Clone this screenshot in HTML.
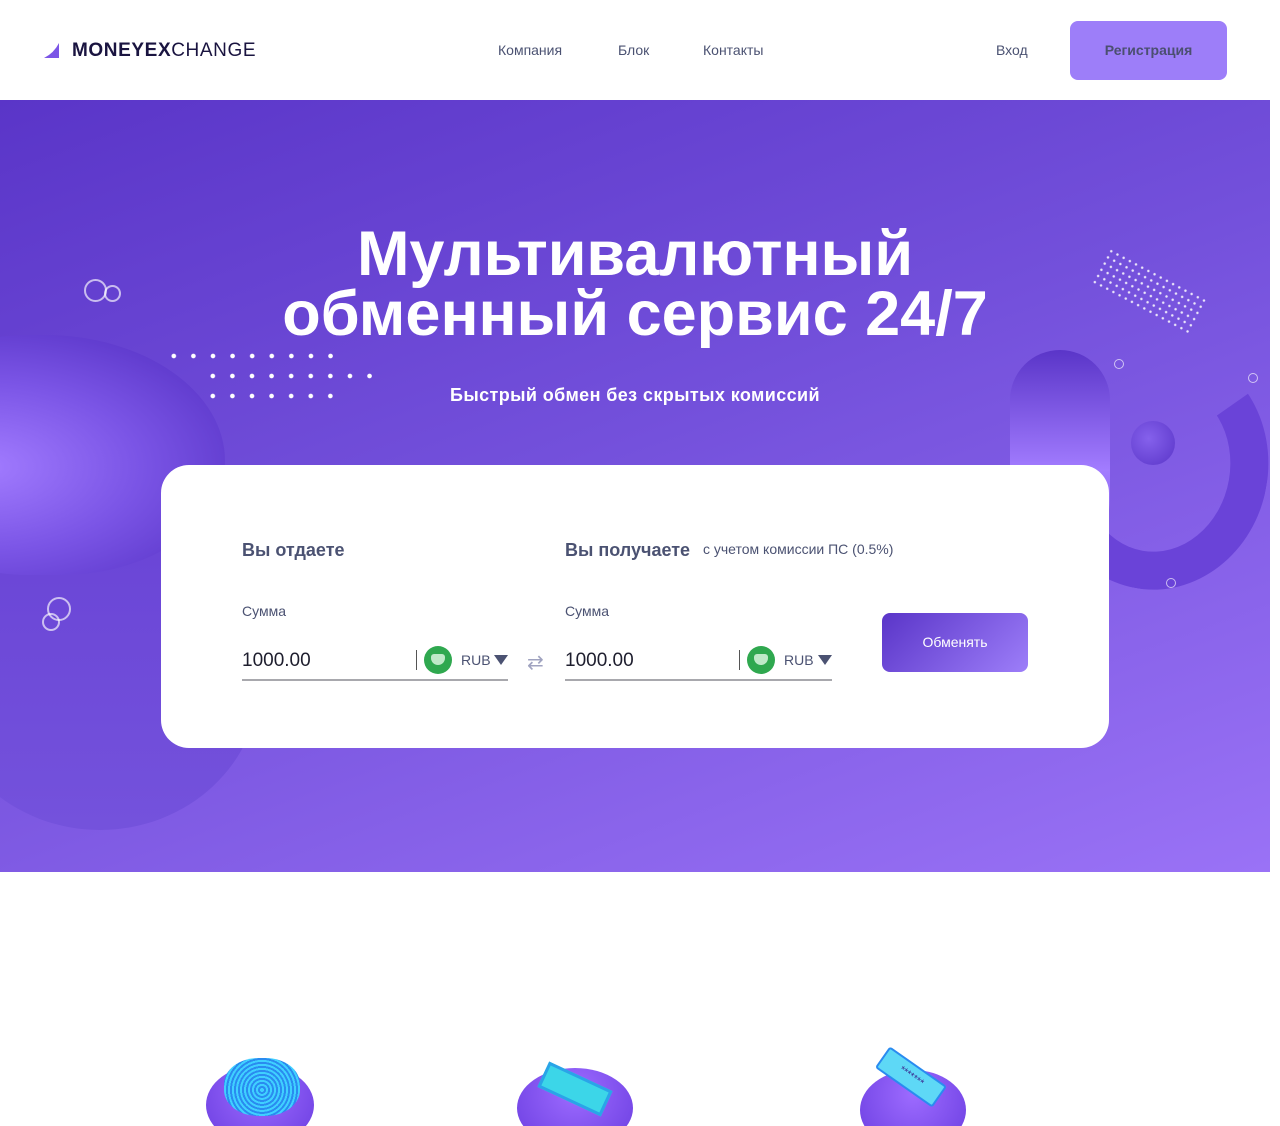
<!DOCTYPE html>
<html><head><meta charset="utf-8"><style>
*{margin:0;padding:0;box-sizing:border-box}
html,body{width:1280px;height:1126px;overflow:hidden}
body{background:#fff;font-family:"Liberation Sans",sans-serif;position:relative}
.a{position:absolute}
header{position:absolute;left:0;top:0;width:1280px;height:100px;background:#fff}
.nav{font-size:14px;color:#4b5272;top:42px}
.hero{left:0;top:100px;width:1270px;height:772px;overflow:hidden;background:linear-gradient(160deg,#5a35c8 0%,#7350db 45%,#9a72f6 100%)}
.ring{border:2px solid rgba(255,255,255,.65);border-radius:50%}
.card{left:161px;top:465px;width:948px;height:283px;background:#fff;border-radius:28px}
.lbl{font-size:18px;font-weight:bold;color:#4b5272}
.sm{font-size:14px;color:#4b5272}
.val{font-size:19px;color:#1e1e2e}
.line{height:2px;background:#a8a8ad}
.sb{width:28px;height:28px;border-radius:50%;background:#2fa84f}
.sb:after{content:"";position:absolute;left:7px;top:8px;width:14px;height:11px;background:#bfe9c8;border-radius:3px 3px 7px 7px}
.tri{width:0;height:0;border-left:7px solid transparent;border-right:7px solid transparent;border-top:10px solid #4b5272}
</style></head><body>
<header>
<svg class="a" style="left:44px;top:43px" width="16" height="15"><path d="M15 0 L15 15 L0 15 Q10 10 15 0Z" fill="#7b55e6"/></svg>
<div class="a" style="left:72px;top:40px;font-size:19px;color:#1a1440;letter-spacing:0.6px"><b>MONEYEX</b>CHANGE</div>
<div class="a nav" style="left:498px">Компания</div>
<div class="a nav" style="left:618px">Блок</div>
<div class="a nav" style="left:703px">Контакты</div>
<div class="a nav" style="left:996px">Вход</div>
<div class="a" style="left:1070px;top:21px;width:157px;height:59px;background:#9d7ef9;border-radius:8px;color:#4b4f70;font-size:14px;font-weight:bold;text-align:center;line-height:59px">Регистрация</div>
</header>
<div class="a hero">
 <div class="a" style="left:-60px;top:430px;width:320px;height:300px;border-radius:50%;background:linear-gradient(180deg,#6a45d6,#7452dc)"></div>
 <div class="a" style="left:-120px;top:235px;width:345px;height:240px;border-radius:45% 55% 50% 45%;background:radial-gradient(ellipse at 30% 55%,#a27cff 0%,#7b55e6 45%,#5531c4 90%)"></div>
 <div class="a ring" style="left:84px;top:179px;width:23px;height:23px"></div>
 <div class="a ring" style="left:104px;top:185px;width:17px;height:17px"></div>
 <div class="a ring" style="left:47px;top:497px;width:24px;height:24px"></div>
 <div class="a ring" style="left:42px;top:513px;width:18px;height:18px"></div>
 <div class="a" style="left:164px;top:246px;width:177px;height:20px;background:radial-gradient(circle,#fff 2px,transparent 2.6px) 0 0/19.6px 20px"></div>
 <div class="a" style="left:203px;top:266px;width:177px;height:20px;background:radial-gradient(circle,#fff 2px,transparent 2.6px) 0 0/19.6px 20px"></div>
 <div class="a" style="left:203px;top:286px;width:138px;height:20px;background:radial-gradient(circle,#fff 2px,transparent 2.6px) 0 0/19.6px 20px"></div>
 <div class="a" style="left:1094px;top:170px;width:110px;height:40px;transform:rotate(28deg);background:radial-gradient(circle,rgba(255,255,255,.85) 1px,transparent 1.5px) 0 0/7px 7px"></div>
 <div class="a" style="left:1046px;top:245px;width:222px;height:245px;border-radius:50%;border:38px solid #6a43d8;border-top-color:transparent;border-left-color:transparent;transform:rotate(10deg)"></div>
 <div class="a" style="left:1010px;top:250px;width:100px;height:200px;border-radius:50px;background:linear-gradient(180deg,#5a35c8,#a27cff 60%,#7b55e6)"></div>
 <div class="a" style="left:1131px;top:321px;width:44px;height:44px;border-radius:50%;background:radial-gradient(circle at 40% 40%,#8561ec,#5a35c8)"></div>
 <div class="a ring" style="left:1114px;top:259px;width:10px;height:10px;border-width:1px"></div>
 <div class="a ring" style="left:1248px;top:273px;width:10px;height:10px;border-width:1px"></div>
 <div class="a ring" style="left:1166px;top:478px;width:10px;height:10px;border-width:1px"></div>
 <div class="a" style="left:0;top:124px;width:1270px;text-align:center;color:#fff;font-size:63px;font-weight:bold;line-height:60px">Мультивалютный<br>обменный сервис 24/7</div>
 <div class="a" style="left:0;top:285px;width:1270px;text-align:center;color:#fff;font-size:18px;font-weight:bold;letter-spacing:0.4px">Быстрый обмен без скрытых комиссий</div>
</div>
<div class="a card"></div>
<div class="a lbl" style="left:242px;top:540px">Вы отдаете</div>
<div class="a lbl" style="left:565px;top:540px">Вы получаете</div>
<div class="a sm" style="left:703px;top:541px">с учетом комиссии ПС (0.5%)</div>
<div class="a sm" style="left:242px;top:603px">Сумма</div>
<div class="a sm" style="left:565px;top:603px">Сумма</div>
<div class="a val" style="left:242px;top:650px">1000.00</div>
<div class="a val" style="left:565px;top:650px">1000.00</div>
<div class="a line" style="left:242px;top:679px;width:266px"></div>
<div class="a line" style="left:565px;top:679px;width:267px"></div>
<div class="a" style="left:416px;top:650px;width:1px;height:20px;background:#555"></div>
<div class="a" style="left:739px;top:650px;width:1px;height:20px;background:#555"></div>
<div class="a sb" style="left:424px;top:646px"></div>
<div class="a sb" style="left:747px;top:646px"></div>
<div class="a sm" style="left:461px;top:652px">RUB</div>
<div class="a sm" style="left:784px;top:652px">RUB</div>
<div class="a tri" style="left:494px;top:655px"></div>
<div class="a tri" style="left:818px;top:655px"></div>
<div class="a" style="left:527px;top:650px;color:#a0a3c0;font-size:20px">⇄</div>
<div class="a" style="left:882px;top:613px;width:146px;height:59px;border-radius:8px;background:linear-gradient(135deg,#5a35c8,#9d7ef9);color:#fff;font-size:14px;text-align:center;line-height:59px">Обменять</div>
<div class="a" style="left:206px;top:1065px;width:108px;height:80px;border-radius:50%;background:radial-gradient(ellipse at 50% 30%,#9d6bff,#6a3de0)"></div>
<div class="a" style="left:224px;top:1058px;width:76px;height:58px;border-radius:45%;background:repeating-radial-gradient(circle at 50% 55%,#3fd0ff 0 2px,#2a8bf0 2px 4px)"></div>
<div class="a" style="left:517px;top:1068px;width:116px;height:80px;border-radius:50%;background:radial-gradient(ellipse at 50% 30%,#9d6bff,#6a3de0)"></div>
<div class="a" style="left:540px;top:1075px;width:70px;height:28px;background:#3cd6e8;border:3px solid #2aa4e8;transform:rotate(25deg)"></div>
<div class="a" style="left:860px;top:1070px;width:106px;height:80px;border-radius:50%;background:radial-gradient(ellipse at 50% 30%,#9d6bff,#6a3de0)"></div>
<div class="a" style="left:876px;top:1064px;width:70px;height:26px;background:#5ed8f6;border:2px solid #2a8bf0;transform:rotate(35deg);border-radius:3px;font-size:10px;color:#3a2a90;line-height:22px;text-align:center">*******</div>
</body></html>
